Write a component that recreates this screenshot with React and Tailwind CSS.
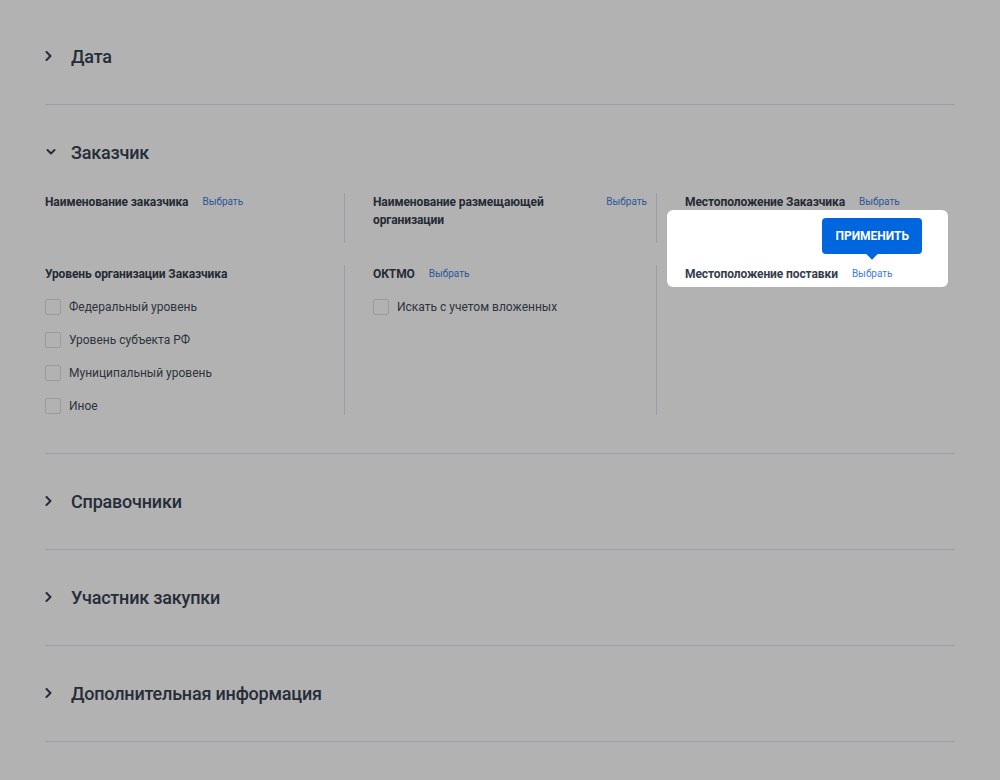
import React from "react";

const ChevronRight = () => (
  <svg width="10" height="10" viewBox="0 0 10 10" fill="none" className="shrink-0">
    <path d="M1.5 1L5.5 5L1.5 9" stroke="currentColor" strokeWidth="2" strokeLinecap="round" strokeLinejoin="round" />
  </svg>
);

const ChevronDown = () => (
  <svg width="10" height="10" viewBox="0 0 10 10" fill="none" className="shrink-0">
    <path d="M1.5 3L5 6.5L8.5 3" stroke="currentColor" strokeWidth="2" strokeLinecap="round" strokeLinejoin="round" />
  </svg>
);

const Link = ({ children = "Выбрать" }) => (
  <a href="#" className="block shrink-0 text-[10px] leading-[18px] text-[#3f7ddb]">
    {children}
  </a>
);

const Label = ({ text, children }) => (
  <div className="flex items-start gap-[14px]">
    <span className="text-[12px] font-bold leading-[18px] tracking-[-0.1px] text-[#353d4c]">{text}</span>
    {children}
  </div>
);

const Checkbox = ({ label }) => (
  <label className="flex h-4 items-center gap-2">
    <span className="h-4 w-4 shrink-0 rounded-[2px] border border-[#dcdfe4] bg-white" />
    <span className="text-[12px] leading-4 text-[#434b59]">{label}</span>
  </label>
);

const Collapsed = ({ title }) => (
  <section className="border-b border-[#dfe4ec] pt-[31px] pb-8">
    <div className="flex h-8 items-center text-[#364152]">
      <span className="w-[26px]">
        <ChevronRight />
      </span>
      <h2 className="text-[18px] font-medium tracking-[-0.2px]">{title}</h2>
    </div>
  </section>
);

export default function App() {
  return (
    <div className="relative min-h-screen bg-white font-['Roboto',sans-serif]">
      <div className="mx-[45px] pt-[9px]">
        <Collapsed title="Дата" />

        {/* Заказчик */}
        <section className="border-b border-[#dfe4ec] pt-[31px] pb-[38px]">
          <div className="flex h-8 items-center text-[#364152]">
            <span className="w-[26px] pl-[1px]">
              <ChevronDown />
            </span>
            <h2 className="text-[18px] font-medium tracking-[-0.2px]">Заказчик</h2>
          </div>

          <div className="mt-[25px] grid grid-cols-[299px_312px_298px] gap-y-[22px]">
            <div className="h-[50px]">
              <Label text="Наименование заказчика">
                <Link />
              </Label>
            </div>
            <div className="border-l border-[#dfe4ec] pl-[28px] pr-[9px]">
              <Label text="Наименование размещающей организации">
                <Link />
              </Label>
            </div>
            <div className="border-l border-[#dfe4ec] pl-[28px]">
              <Label text="Местоположение Заказчика">
                <Link />
              </Label>
            </div>

            <div className="h-[150px]">
              <Label text="Уровень организации Заказчика" />
              <div className="mt-4 flex flex-col gap-[17px]">
                <Checkbox label="Федеральный уровень" />
                <Checkbox label="Уровень субъекта РФ" />
                <Checkbox label="Муниципальный уровень" />
                <Checkbox label="Иное" />
              </div>
            </div>
            <div className="border-l border-[#dfe4ec] pl-[28px] pr-[9px]">
              <Label text="ОКТМО">
                <Link />
              </Label>
              <div className="mt-4 flex flex-col gap-[17px]">
                <Checkbox label="Искать с учетом вложенных" />
              </div>
            </div>
            <div className="border-l border-[#dfe4ec] pl-[28px]">
              <div className="relative">
                {/* tour highlight: transparent hole, shadow dims the rest of the page */}
                <div className="pointer-events-none absolute -top-[55px] -left-[18px] right-[6px] -bottom-[4px] z-10 rounded-[6px] shadow-[0_0_0_3000px_rgba(0,0,0,0.3)]" />
                <Label text="Местоположение поставки">
                  <span className="relative block">
                    <Link />
                    <button className="absolute bottom-[29px] left-1/2 z-20 h-9 w-[100px] -translate-x-1/2 rounded-[4px] bg-[#0066dd] text-[12px] font-bold text-white">
                      ПРИМЕНИТЬ
                      <span className="absolute -bottom-1 left-1/2 h-2 w-2 -translate-x-1/2 rotate-45 bg-[#0066dd]" />
                    </button>
                  </span>
                </Label>
              </div>
            </div>
          </div>
        </section>

        <Collapsed title="Справочники" />
        <Collapsed title="Участник закупки" />
        <Collapsed title="Дополнительная информация" />
      </div>
    </div>
  );
}
